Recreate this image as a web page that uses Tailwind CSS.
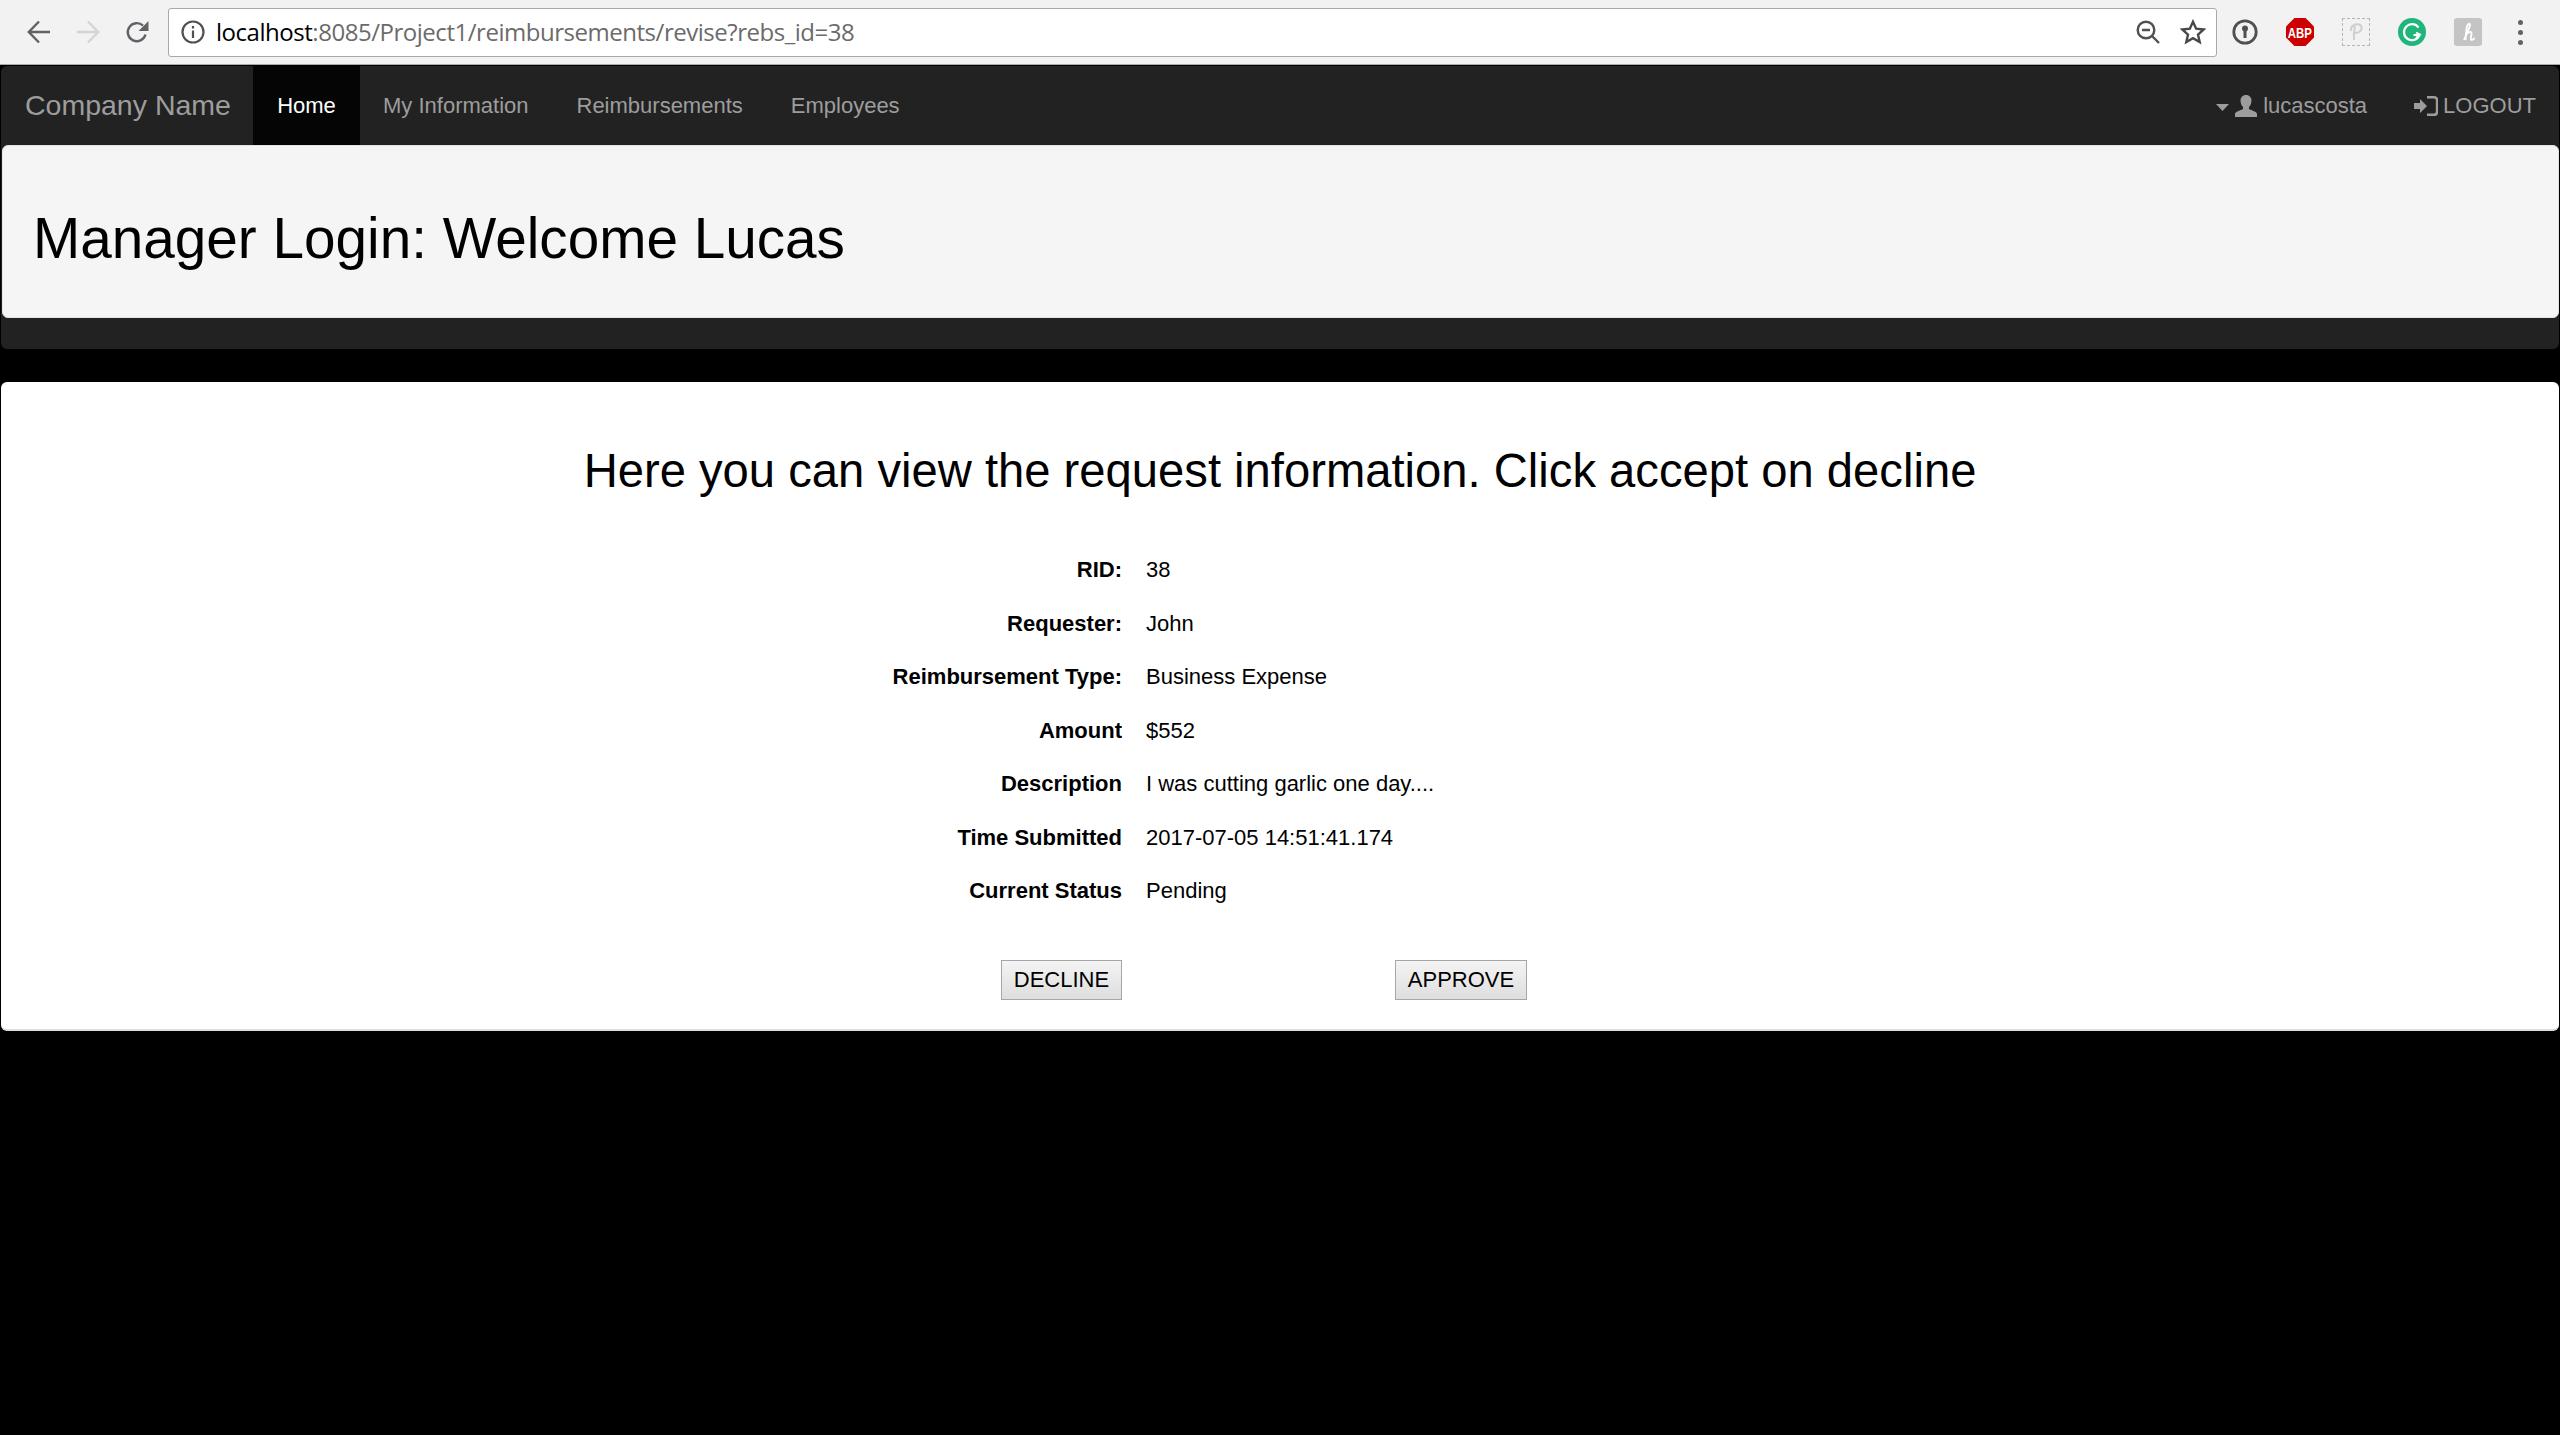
<!DOCTYPE html>
<html lang="en">

<head>
  <meta charset="UTF-8">
  <title>Manager Login</title>
  <script src="https://cdn.jsdelivr.net/npm/@tailwindcss/browser@4"></script>
</head>

<body class="bg-black h-[1435px] overflow-hidden font-['Liberation_Sans',Arial,sans-serif] text-black">

  <!-- browser toolbar -->
  <div class="h-[65px] bg-[#f2f2f2] border-b border-[#a9a9a9] flex items-center">
    <svg class="ml-[27px] w-6 h-6 shrink-0" viewBox="0 0 24 24" fill="none" stroke="#5f6368" stroke-width="2.4">
      <path d="M23 12H2M12 1.500 1.800 12 12 22.500" />
    </svg>
    <svg class="ml-[25px] w-6 h-6 shrink-0" viewBox="0 0 24 24" fill="none" stroke="#d4d4d4" stroke-width="2.4">
      <path d="M1 12h21M12 1.500 22.200 12 12 22.500" />
    </svg>
    <svg class="ml-[25px] w-6 h-6 shrink-0" viewBox="0 0 24 24" fill="none">
      <path d="M20.500 14.500A9 9 0 1 1 18 5.600" stroke="#5f6368" stroke-width="2.400" />
      <path d="M23.500 1v10h-10z" fill="#5f6368" />
    </svg>
    <div class="ml-[19px] w-[2049px] h-[49px] shrink-0 bg-white border border-[#a9a9a9] rounded-[3px] flex items-center">
      <svg class="ml-[12px] w-6 h-6 shrink-0" viewBox="0 0 24 24" fill="none" stroke="#505050" stroke-width="2.200">
        <circle cx="12" cy="12" r="10.500" />
        <path d="M12 10.500v7.500M12 6v2.500" />
      </svg>
      <div class="ml-[11px] text-[24px] leading-none tracking-[-0.47px] font-['Open_Sans',sans-serif] text-[#6b6b6b] whitespace-nowrap"><span class="text-black">localhost</span>:8085/Project1/reimbursements/revise?rebs_id=38</div>
      <div class="flex-1"></div>
      <svg class="w-6 h-6 shrink-0" viewBox="0 0 24 24" fill="none" stroke="#505050" stroke-width="2.400">
        <circle cx="10" cy="10" r="8.300" />
        <path d="M6 10h8M16 16l7 7" />
      </svg>
      <svg class="ml-[20px] mr-[10px] w-[26px] h-[26px] shrink-0" viewBox="0 0 24 24" fill="none" stroke="#484848" stroke-width="2.200">
        <path d="m12 2.500 2.900 6.500 7 .7-5.300 4.700 1.600 6.900-6.200-3.600-6.200 3.600 1.600-6.900-5.300-4.700 7-.7z" />
      </svg>
    </div>
    <!-- extension icons -->
    <svg class="ml-[15px] w-[26px] h-[26px] shrink-0" viewBox="0 0 26 26">
      <circle cx="13" cy="13" r="11.200" fill="none" stroke="#505050" stroke-width="2.800" />
      <circle cx="13" cy="9.500" r="3" fill="#505050" />
      <path d="M11.500 10h3v9h-3z" fill="#505050" />
    </svg>
    <div class="ml-[28px] w-7 h-7 shrink-0 bg-[#cc0000] [clip-path:polygon(30%_0,70%_0,100%_30%,100%_70%,70%_100%,30%_100%,0_70%,0_30%)] flex items-center justify-center text-white">
      <span class="text-[15px] font-bold leading-none scale-x-[0.76]">ABP</span>
    </div>
    <div class="ml-[28px] w-7 h-7 shrink-0 border border-dashed border-[#b5b5b5] flex items-center justify-center">
      <svg class="w-4 h-5" viewBox="0 0 16 20" fill="none" stroke="#cfcfcf" stroke-width="2">
        <path d="M6 18C5.500 13 6 8 7 4M3 9C2 4 7 1.500 11 2.500 14.500 3.500 14.500 8 11 10 9.500 11 7.500 11 6 10.500" />
      </svg>
    </div>
    <svg class="ml-[28px] w-7 h-7 shrink-0" viewBox="0 0 28 28">
      <circle cx="14" cy="14" r="14" fill="#1fb57b" />
      <path d="M20.500 9.500A8 8 0 1 0 21.500 17H15.500" fill="none" stroke="#fff" stroke-width="2.200" />
      <path d="m18 20 4-3.500-4-2" fill="none" stroke="#fff" stroke-width="1.800" />
    </svg>
    <div class="ml-[28px] w-7 h-7 shrink-0 rounded-[3px] bg-[#c4c4c4] flex items-center justify-center">
      <svg class="w-4 h-5" viewBox="0 0 16 20" fill="none" stroke="#fff" stroke-width="1.800">
        <path d="M4 18C7 11 10 5 10 3 10 1 8 1.500 7 4 6 8 6 14 5.500 18M6 13C8 10 11 9 11.500 11 12 13 10 16 11 17.500 12 18.500 13.500 17.500 14.500 16" />
      </svg>
    </div>
    <div class="ml-[36px] flex flex-col gap-[5px] shrink-0">
      <div class="w-[5px] h-[5px] rounded-full bg-[#5f6368]"></div>
      <div class="w-[5px] h-[5px] rounded-full bg-[#5f6368]"></div>
      <div class="w-[5px] h-[5px] rounded-full bg-[#5f6368]"></div>
    </div>
  </div>

  <!-- navbar + jumbotron -->
  <div class="mx-px mt-px h-[283px] bg-[#222222] rounded-[6px]">
    <nav class="h-[79px] flex items-center text-[22px] text-[#9d9d9d]">
      <a class="w-[252px] pl-[24px] text-[28.500px] whitespace-nowrap">Company Name</a>
      <a class="h-full w-[107px] flex items-center justify-center bg-[#050505] text-white">Home</a>
      <a class="ml-[23px]">My Information</a>
      <a class="ml-[48px]">Reimbursements</a>
      <a class="ml-[48px]">Employees</a>
      <div class="flex-1"></div>
      <svg class="w-[13px] h-[7px] mr-[6px] mt-[3px]" viewBox="0 0 13 7">
        <path d="M0 0h13L6.500 7z" fill="#9d9d9d" />
      </svg>
      <svg class="w-[22px] h-[22px] mr-[6px]" viewBox="0 0 22 22">
        <path d="M11 0c3.500 0 5.500 2.500 5.500 5.500 0 2.500-1 5-2.500 6.500v2c1 1 8 2.500 8 5v3H0v-3c0-2.500 7-4 8-5v-2C6.500 10.500 5.500 8 5.500 5.500 5.500 2.500 7.500 0 11 0z" fill="#9d9d9d" />
      </svg>
      <span>lucascosta</span>
      <svg class="ml-[47px] w-[24px] h-[20px] mr-[5px]" viewBox="0 0 24 20">
        <path d="M0 7h6V3l7 7-7 7v-4H0z" fill="#9d9d9d" />
        <path d="M13 1.200h7c2 0 3 1 3 3v11.600c0 2-1 3-3 3h-7" fill="none" stroke="#9d9d9d" stroke-width="2.400" />
      </svg>
      <span class="mr-[23px]">LOGOUT</span>
    </nav>
    <div class="ml-px h-[173px] bg-[#f5f5f5] border border-[#e3e3e3] rounded-[6px] flex items-center pl-[30px] pt-[15px]">
      <h1 class="text-[56.700px] leading-none">Manager Login: Welcome Lucas</h1>
    </div>
  </div>

  <!-- request panel -->
  <div class="mx-px mt-[33px] h-[649px] bg-white border-b-2 border-[#dddddd] rounded-[6px]">
    <h2 class="pt-[64px] text-center text-[47.200px] leading-[50px]">Here you can view the request information. Click accept on decline</h2>
    <div class="pt-[62px] text-[22px] leading-[24px]">
      <div class="flex h-[53.500px] items-start"><b class="w-[1121px] text-right">RID:</b><span class="ml-[24px]">38</span></div>
      <div class="flex h-[53.500px] items-start"><b class="w-[1121px] text-right">Requester:</b><span class="ml-[24px]">John</span></div>
      <div class="flex h-[53.500px] items-start"><b class="w-[1121px] text-right">Reimbursement Type:</b><span class="ml-[24px]">Business Expense</span></div>
      <div class="flex h-[53.500px] items-start"><b class="w-[1121px] text-right">Amount</b><span class="ml-[24px]">$552</span></div>
      <div class="flex h-[53.500px] items-start"><b class="w-[1121px] text-right">Description</b><span class="ml-[24px]">I was cutting garlic one day....</span></div>
      <div class="flex h-[53.500px] items-start"><b class="w-[1121px] text-right">Time Submitted</b><span class="ml-[24px]">2017-07-05 14:51:41.174</span></div>
      <div class="flex h-[53.500px] items-start"><b class="w-[1121px] text-right">Current Status</b><span class="ml-[24px]">Pending</span></div>
    </div>
    <div class="mt-[27px] flex">
      <button class="ml-[1000px] w-[121px] h-[40px] border border-[#a6a6a6] bg-gradient-to-b from-[#f4f4f4] to-[#dedede] text-[22px] leading-none">DECLINE</button>
      <button class="ml-[273px] w-[132px] h-[40px] border border-[#a6a6a6] bg-gradient-to-b from-[#f4f4f4] to-[#dedede] text-[22px] leading-none">APPROVE</button>
    </div>
  </div>

</body>

</html>
